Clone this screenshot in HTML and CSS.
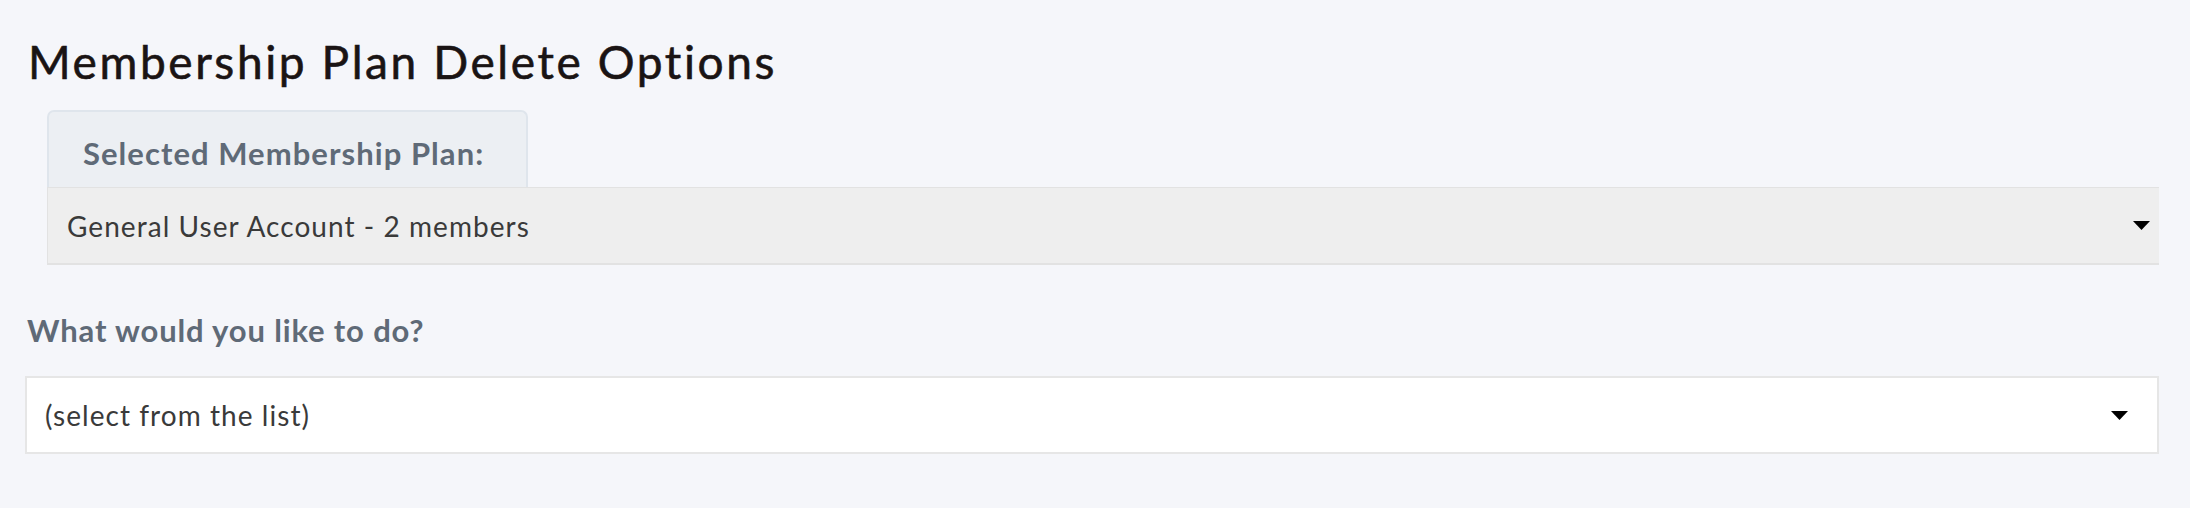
FILE: index.html
```html
<!DOCTYPE html>
<html lang="en">
<head>
<meta charset="utf-8">
<title>Membership Plan Delete Options</title>
<link rel="stylesheet" href="styles.css">
</head>
<body>
<main class="page">
  <h1 class="title">Membership Plan Delete Options</h1>
  <section class="plan">
    <div class="tab"><span class="tab-label">Selected Membership Plan:</span></div>
    <div class="select select-plan">
      <span class="select-text">General User Account - 2 members</span>
      <svg class="caret" width="17" height="9" viewBox="0 0 17 9" aria-hidden="true"><path d="M0 0H17L8.5 9Z" fill="#000"/></svg>
    </div>
  </section>
  <section class="action">
    <label class="field-label">What would you like to do?</label>
    <div class="select select-action">
      <span class="select-text">(select from the list)</span>
      <svg class="caret" width="17" height="9" viewBox="0 0 17 9" aria-hidden="true"><path d="M0 0H17L8.5 9Z" fill="#000"/></svg>
    </div>
  </section>
</main>
</body>
</html>
```
FILE: styles.css
```css
html, body {
  margin: 0;
  padding: 0;
  background: #f5f6fa;
}
body {
  font-family: Lato, "Open Sans", sans-serif;
}
.page {
  padding: 30px 31px 0 25px;
  display: flex;
  flex-direction: column;
}
.title {
  margin: 0;
  font-size: 46px;
  font-weight: 400;
  line-height: 64px;
  letter-spacing: 2.6px;
  color: #1a1414;
  -webkit-text-stroke: 0.6px #1a1414;
  padding-left: 3px;
}
.plan {
  margin: 16px 0 0 22px;
  display: flex;
  flex-direction: column;
}
.tab {
  align-self: flex-start;
  width: 481px;
  height: 77px;
  box-sizing: border-box;
  background: #eceff3;
  border: 2px solid #dfe5ec;
  border-bottom: none;
  border-radius: 7px 7px 0 0;
  display: flex;
  align-items: center;
  padding: 6px 0 0 34px;
}
.tab-label, .field-label {
  font-size: 31px;
  font-weight: 700;
  color: #5f6a77;
}
.tab-label {
  letter-spacing: 1.05px;
}
.select {
  display: flex;
  align-items: center;
  justify-content: space-between;
  box-sizing: border-box;
  height: 78px;
}
.select-text {
  font-size: 28px;
  letter-spacing: 1.05px;
  color: #3a3a3a;
}
.select-plan {
  background: #eeeeee;
  border-top: 1px solid #e2e2e2;
  border-left: 1px solid #e2e2e2;
  border-bottom: 2px solid #e2e2e2;
  padding: 0 9px 0 19px;
}
.action {
  margin-top: 45px;
  display: flex;
  flex-direction: column;
}
.field-label {
  line-height: 40px;
  padding-left: 2px;
  letter-spacing: 0.85px;
}
.select-action {
  margin-top: 26px;
  background: #ffffff;
  border: 2px solid #e6e6e6;
  padding: 0 29px 0 18px;
}
```
